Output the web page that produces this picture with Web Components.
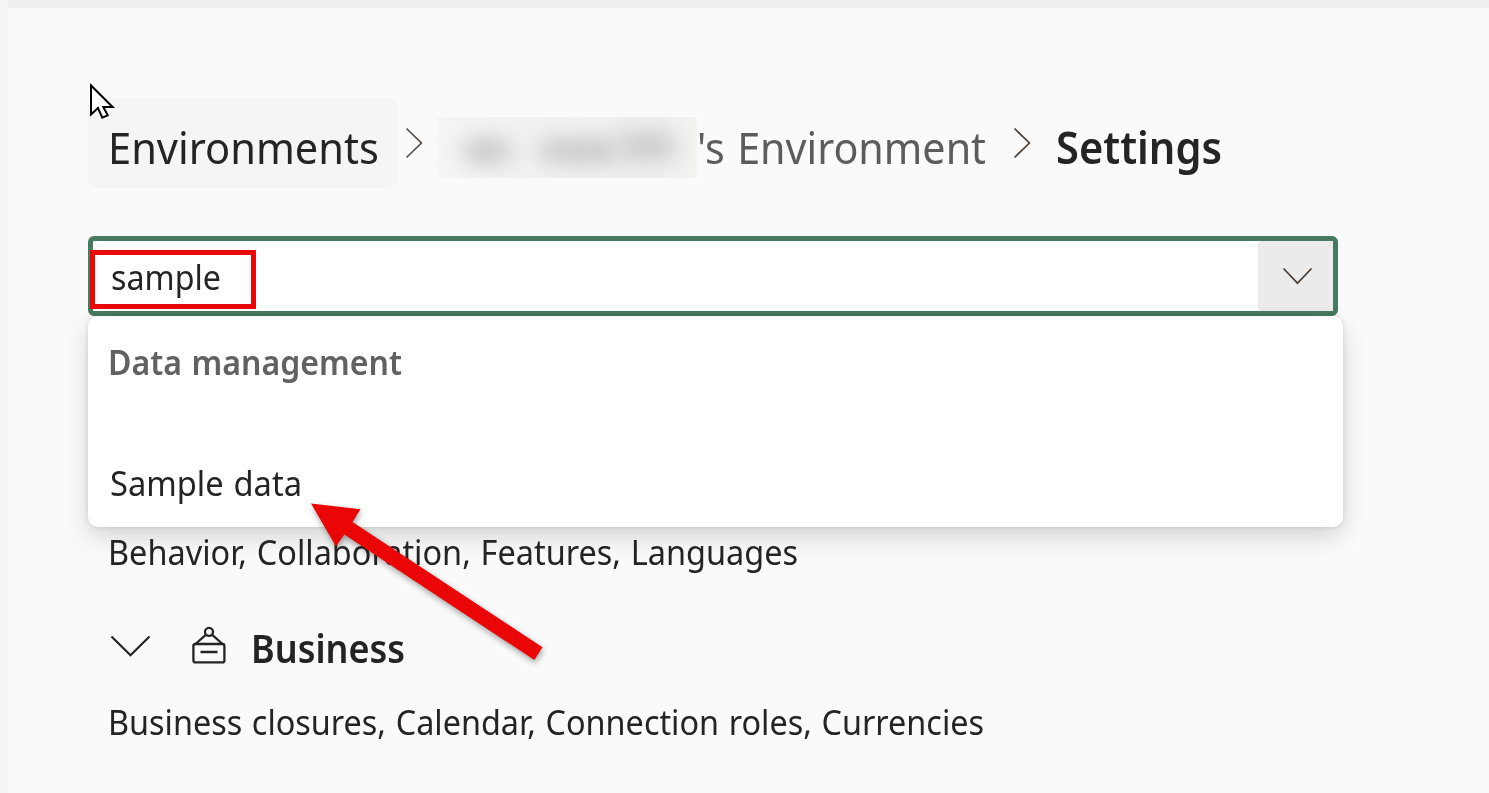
<!DOCTYPE html>
<html lang="en"><head><meta charset="utf-8"><title>Settings</title>
<style>body{margin:0;overflow:hidden;background:#fafafa;font-family:"Noto Sans","Open Sans",sans-serif;color:#242424}</style></head>
<body><settings-page></settings-page>
<script>
const define=(name,html,init)=>customElements.define(name,class extends HTMLElement{
  connectedCallback(){ if(this.shadowRoot)return; this.attachShadow({mode:'open'}).innerHTML=html; if(init)init(this,this.shadowRoot); }
});

/* One line of text, condensed horizontally to the width given in "w". */
define('fit-text',`<style>:host{display:block;white-space:nowrap;height:var(--lh,46px);line-height:var(--lh,46px);flex:none}
span{display:inline-block;transform-origin:0 50%;word-spacing:.04em}</style><span><slot></slot></span>`,(el,root)=>{
  const w=+el.getAttribute('w'),s=root.querySelector('span');
  el.style.width=w+'px';
  s.style.transform='scaleX('+w/s.getBoundingClientRect().width+')';
});

define('chevron-icon',`<style>:host{display:block;flex:none}svg{display:block;overflow:visible}
path{fill:none;stroke:var(--ink,#4a4039);stroke-width:var(--sw,1.7)}</style><svg><path/></svg>`,(el,root)=>{
  const w=+el.getAttribute('w'),h=+el.getAttribute('h'),svg=root.querySelector('svg');
  svg.setAttribute('width',w);svg.setAttribute('height',h);
  root.querySelector('path').setAttribute('d',el.hasAttribute('right')?`M.5.5L${w-1.6} ${h/2}L.5 ${h-.5}`:`M.5.5L${w/2} ${h-.8}L${w-.5}.5`);
});

define('redacted-name',`<style>:host{display:block;flex:none;position:relative;overflow:hidden;width:260px;height:61px;background:linear-gradient(90deg,#f5f5f5,#f2f2f2 30%,#f0f0f0 80%,#f2f2f1)}
i{position:absolute;filter:blur(11px);background:#c2c2c2;border-radius:12px}
.a{left:26px;top:23px;width:48px;height:22px}.b{left:102px;top:24px;width:80px;height:20px}.c{left:182px;top:15px;width:56px;height:28px;background:#cacaca}</style><i class="a"></i><i class="b"></i><i class="c"></i>`);

define('crumb-trail',`<style>:host{display:flex;height:90px;align-items:center;font-size:44.6px;--lh:80px}
.root{background:#f5f5f5;border-radius:10px;height:90px;width:310px;box-sizing:border-box;padding:9px 20px 0}
.c1{margin:0 14px 0 8px}.mid{display:flex;align-items:center;color:#5c5c5c}
redacted-name{margin-top:9px}.mid fit-text{margin-top:8px}
.c2{margin:0 25px 0 28px}.last{font-weight:600;margin-top:8px}</style>
<div class="root"><fit-text w="271">Environments</fit-text></div>
<chevron-icon class="c1" right w="17" h="30" style="--ink:#55504c"></chevron-icon>
<div class="mid"><redacted-name></redacted-name><fit-text w="289">'s Environment</fit-text></div>
<chevron-icon class="c2" right w="17" h="30"></chevron-icon>
<fit-text class="last" w="166">Settings</fit-text>`);

define('result-list',`<style>:host{display:block;box-sizing:border-box;background:#fff;border-radius:10px;padding:23px 20px 0;
box-shadow:0 0 5px rgba(0,0,0,.12),0 10px 24px rgba(0,0,0,.15)}
.group{color:#616161;font-weight:600}.item{margin:75px 0 0 2px}</style>
<fit-text class="group" w="294">Data management</fit-text><fit-text class="item" w="192">Sample data</fit-text>`);

define('search-combo',`<style>:host{display:flex;position:relative;box-sizing:border-box;width:1250px;height:80px;border:5px solid #467b62;border-radius:6px;background:#fff;font-size:34.8px}
.value{flex:1;padding:13px 0 0 18px}
.toggle{width:75px;background:#ebebeb;border-radius:4px 0 0 4px;display:flex;justify-content:center;padding:27px 0 0 4px;box-sizing:border-box}
.mark{position:absolute;left:-3px;top:9px;width:166px;height:59px;box-sizing:border-box;border:5px solid #e90707}
result-list{position:absolute;left:-5px;top:75px;width:1255px;height:211px}</style>
<div class="value"><fit-text w="110">sample</fit-text></div>
<div class="toggle"><chevron-icon w="29" h="16"></chevron-icon></div>
<result-list></result-list><div class="mark"></div>`);

define('sign-icon',`<style>:host{display:block;flex:none}svg{display:block;fill:none;stroke:#242424;stroke-width:2.3}</style>
<svg width="34" height="38"><rect x="1.4" y="18" width="31" height="18.4" rx="2"/><circle cx="17" cy="5.8" r="4"/><path d="M14 8.7L3.5 18M20 8.7L30.5 18M8.5 26H25.5"/></svg>`);

define('settings-group',`<style>:host{display:block;font-size:34.8px}
.head{display:flex;align-items:flex-start;font-size:39.5px;font-weight:600;--lh:54px;height:54px;margin-bottom:24px}
.head chevron-icon{margin:15px 42px 0 3px}.head sign-icon{margin:5px 25px 0 0}</style>
<div class="head"><chevron-icon w="39" h="20" style="--ink:#242424;--sw:2.2"></chevron-icon><sign-icon></sign-icon><fit-text w="154">Business</fit-text></div>
<fit-text w="876">Business closures, Calendar, Connection roles, Currencies</fit-text>`);

define('mouse-pointer',`<style>:host{display:block;position:absolute;left:81px;top:82px}svg{display:block}</style>
<svg width="28" height="38"><path d="M2 3.5V32.5L9 26L13.3 35.7L18.7 33.3L14.3 25H23.6Z" fill="#fff" stroke="#000" stroke-width="2"/></svg>`);

define('red-arrow',`<style>:host{display:block;position:absolute;z-index:2;left:292px;top:495px;filter:drop-shadow(1px 3px 3px rgba(0,0,0,.35))}svg{display:block}</style>
<svg width="250" height="175"><path d="M11 8.5L60.5 14.3L52.5 27L242.5 152.3L234.3 165L44.3 39.5L36 51.5Z" fill="#ea0606"/></svg>`);

define('settings-page',`<style>:host{display:block;position:relative;box-sizing:border-box;width:1489px;height:793px;border:0 solid #f4f4f4;border-left-width:8px;padding-left:80px;background:#fafafa;overflow:hidden}
.top{height:8px;margin:0 0 90px -88px;position:relative;background:#efefef}
crumb-trail{margin-bottom:48px}
search-combo{z-index:1}
.list{padding:213px 0 0 20px;font-size:34.8px}
settings-group{margin-top:46px}
.over{position:relative;z-index:2}</style>
<div class="top"></div>
<crumb-trail></crumb-trail><search-combo></search-combo>
<div class="list"><fit-text class="over" w="690">Behavior, Collaboration, Features, Languages</fit-text><settings-group></settings-group></div>
<mouse-pointer></mouse-pointer><red-arrow></red-arrow>`);
</script></body></html>
